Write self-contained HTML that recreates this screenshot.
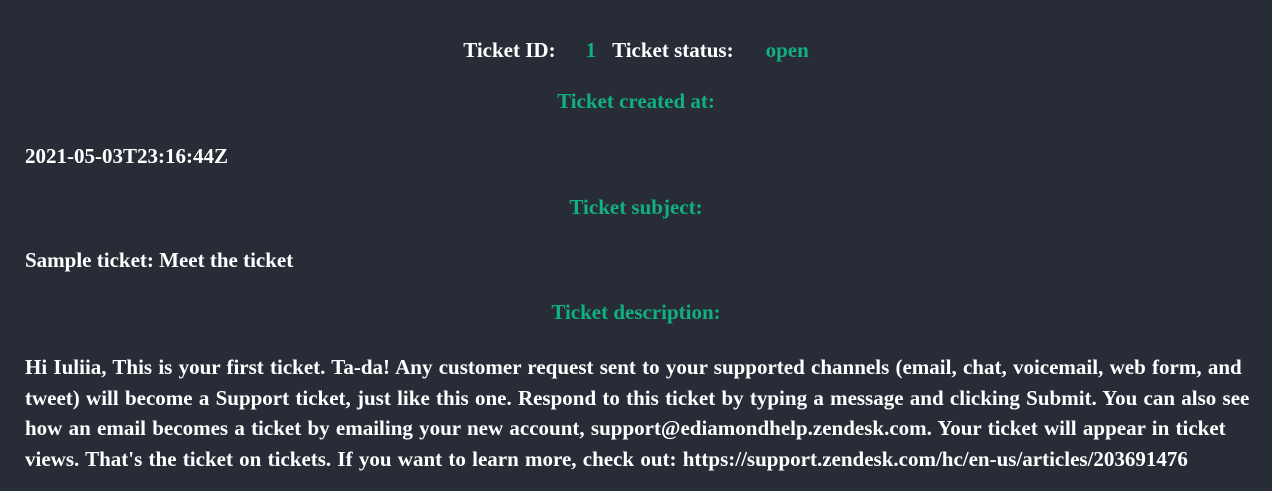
<!DOCTYPE html>
<html><head><meta charset="utf-8"><style>
html,body{margin:0;padding:0;}
body{width:1272px;height:491px;background:#282c37;color:#fff;font-family:"Liberation Serif",serif;font-weight:bold;font-size:21px;position:relative;overflow:hidden;}
.g{color:#10b07f;}
.c{position:absolute;left:0;width:1272px;text-align:center;line-height:24px;}
.l{position:absolute;left:25px;line-height:24px;}
.d{position:absolute;left:25px;width:1245px;top:352px;line-height:30.7px;white-space:nowrap;word-spacing:1px;}
</style></head><body>
<div class="c" style="top:38px">Ticket ID:<span class="g" style="margin-left:30px">1</span><span style="margin-left:16px">Ticket status:</span><span class="g" style="margin-left:32px">open</span></div>
<div class="c g" style="top:89px">Ticket created at:</div>
<div class="l" style="top:144px">2021-05-03T23:16:44Z</div>
<div class="c g" style="top:195px">Ticket subject:</div>
<div class="l" style="top:248px">Sample ticket: Meet the ticket</div>
<div class="c g" style="top:300px">Ticket description:</div>
<div class="d">Hi Iuliia, This is your first ticket. Ta-da! Any customer request sent to your supported channels (email, chat, voicemail, web form, and<br>tweet) will become a Support ticket, just like this one. Respond to this ticket by typing a message and clicking Submit. You can also see<br>how an email becomes a ticket by emailing your new account, support@ediamondhelp.zendesk.com. Your ticket will appear in ticket<br>views. That's the ticket on tickets. If you want to learn more, check out: https://support.zendesk.com/hc/en-us/articles/203691476</div>
</body></html>
